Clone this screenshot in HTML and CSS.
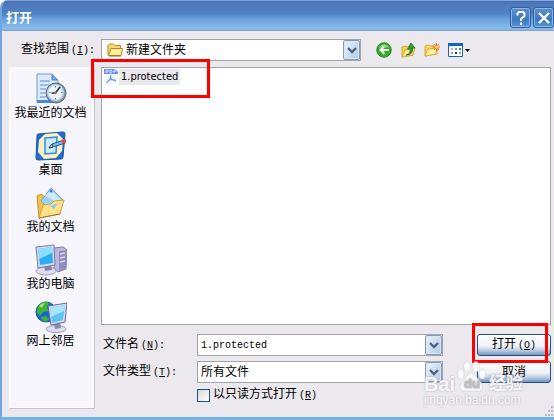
FILE: index.html
```html
<!DOCTYPE html>
<html lang="zh-CN">
<head>
    <meta charset="UTF-8">
    <meta name="viewport" content="width=device-width, initial-scale=1.0">
    <title>打开</title>
    <link rel="stylesheet" href="styles.css">
</head>
<body>
    <div class="window">
        <header class="titlebar">
            <h1>打开</h1>
            <button type="button" class="title-btn" aria-label="帮助">
                <svg width="12" height="14" viewBox="0 0 12 14"><path d="M2.500 4.500V2.500L4 1h4l1.500 1.500v2.500L6 8v2M6 11.500V14" fill="none" stroke="#fff" stroke-width="2"/></svg>
            </button>
            <button type="button" class="title-btn" aria-label="关闭">
                <svg width="12" height="12" viewBox="0 0 12 12"><path d="M1 1l10 10M11 1L1 11" stroke="#fff" stroke-width="2.400"/></svg>
            </button>
        </header>

        <form class="content">
            <div class="look-in">
                <label for="folder">查找范围<span class="key">(<u>I</u>):</span></label>
                <div class="combo">
                    <svg class="folder-icon" width="16" height="16" viewBox="0 0 16 16">
                        <path d="M1 13V3.500L2.500 2h4L8 3.500h5.500v2.500" fill="#f5d873" stroke="#b98a17"/>
                        <path d="M1.500 13.500L4 6.500h11.500L14 13.500z" fill="#fff0a6" stroke="#b98a17"/>
                        <path d="M2 14h12" stroke="#8e6b12"/>
                    </svg>
                    <select id="folder">
                        <option>新建文件夹</option>
                    </select>
                    <span class="arrow"><svg width="10" height="7" viewBox="0 0 10 7"><path d="M1 1l4 4 4-4" fill="none" stroke="#4d6185" stroke-width="2.400"/></svg></span>
                </div>
                <div class="tools">
                    <button type="button" aria-label="后退">
                        <svg width="16" height="16" viewBox="0 0 16 16">
                            <circle cx="8" cy="8" r="7.200" fill="#35ad29" stroke="#168216"/>
                            <path d="M2.500 5.500Q8-1 13.500 5.500" fill="#83d470"/>
                            <path d="M13 8H5M8.500 4L4.500 8l4 4" fill="none" stroke="#fff" stroke-width="2"/>
                        </svg>
                    </button>
                    <button type="button" aria-label="向上一级">
                        <svg width="16" height="16" viewBox="0 0 16 16">
                            <path d="M2 15V5l4-1 1 1h6v8z" fill="#f2cf58" stroke="#d7a831"/>
                            <path d="M2 15L5 8l10-2-2 7z" fill="#ffe991" stroke="#d7a831"/>
                            <path d="M6 13q5-1 4-6H7.500L11 1l4 5h-2.500q1 7-6.500 7z" fill="#329c32" stroke="#1c721c" stroke-width=".8"/>
                        </svg>
                    </button>
                    <button type="button" aria-label="新建文件夹">
                        <svg width="16" height="16" viewBox="0 0 16 16">
                            <path d="M1 14V4l4-1 1 1h7v8z" fill="#f5d56b" stroke="#dbab36"/>
                            <path d="M1 14L4 7l10-1-2 6z" fill="#fff0a2" stroke="#dbab36"/>
                            <path d="M12.500 1v8M8.500 5h8M10 2l5 6M15 2l-5 6" stroke="#f26522"/>
                            <circle cx="12.500" cy="5" r="1.500" fill="#ffdf78"/>
                        </svg>
                    </button>
                    <button type="button" class="views" aria-label="查看">
                        <svg width="22" height="16" viewBox="0 0 22 16">
                            <path d="M.5 1.500h14v13H.5z" fill="#fff" stroke="#0c65ce"/>
                            <path d="M0 1h15v3H0z" fill="#0c65ce"/>
                            <path d="M3 6h2v2H3z" fill="#b6a8d8"/><path d="M7 6h2v2H7z" fill="#6696d8"/><path d="M11 6h2v2h-2z" fill="#2c9c45"/>
                            <path d="M3 10h2v2H3z" fill="#f08068"/><path d="M7 10h2v2H7z" fill="#1a3fa0"/><path d="M11 10h2v2h-2z" fill="#c8a020"/>
                            <path d="M17 7h5l-2.500 3z" fill="#000"/>
                        </svg>
                    </button>
                </div>
            </div>

            <div class="panes">
                <nav class="places">
                    <a href="#">
                        <svg width="32" height="32" viewBox="0 0 32 32">
                            <path d="M2 1h15l6 6v22H2z" fill="#dcebff" stroke="#6f9edb"/>
                            <path d="M17 1v6h6" fill="#6baaf0" stroke="#477fc7"/>
                            <path d="M5 8h10M5 12h9M5 16h6M5 20h5M5 24h6" stroke="#85aee3" stroke-width="1.500"/>
                            <path d="M2 27h17v3H2z" fill="#4788dc"/>
                            <circle cx="21" cy="20" r="10" fill="#8798a8" stroke="#586778"/>
                            <circle cx="20.500" cy="19.500" r="7.800" fill="#e7f7ff" stroke="#c3d5e0" stroke-width="1.500"/>
                            <path d="M20.500 13v1.500M20.500 25v1.500M14 19.500h1.500M26 19.500h1.500" stroke="#587aa0"/>
                            <path d="M25 14l-4.500 6h-4" fill="none" stroke="#24313f" stroke-width="1.600"/>
                            <circle cx="20.500" cy="20" r="1.200" fill="#f05d24"/>
                        </svg>
                        <span>我最近的文档</span>
                    </a>
                    <a href="#">
                        <svg width="32" height="32" viewBox="0 0 32 32">
                            <path d="M3 4l25-2q2 0 2 2l-2 23q0 2-2 2L3 30q-2 0-2-2L2 6q0-2 1-2z" fill="#1f6ed4" stroke="#1552a8"/>
                            <path d="M10 4l12-1 6 6-1 12-6 7-12 1-6-7 1-12z" fill="#fff1bd"/>
                            <path d="M10 8l12-1-1 16-11 1z" fill="#c9eaff" stroke="#2b8be0" stroke-width="1.500"/>
                            <path d="M14 18l3-4 12-4 1 3-12 4z" fill="#75b8f3" stroke="#285a94"/>
                            <path d="M14 18l3-4 1 3z" fill="#fff" stroke="#222" stroke-width=".8"/>
                            <circle cx="29" cy="11" r="2.300" fill="#e34b33"/>
                        </svg>
                        <span>桌面</span>
                    </a>
                    <a href="#">
                        <svg width="32" height="32" viewBox="0 0 32 32">
                            <path d="M2 9l4-2 4 3 14 1v14L4 31z" fill="#efc24a" stroke="#c6922e"/>
                            <path d="M16 1l12 12-10 13L6 14z" fill="#9cd1fa" stroke="#67a9e3"/>
                            <path d="M16 3l10 10-2 3L10 9z" fill="#cfeaff"/>
                            <circle cx="16" cy="4" r="1.500" fill="#2f83d7"/>
                            <path d="M4 31l4-13 8-1 3-3 10-1-4 14z" fill="#ffe18a" stroke="#d5a13a"/>
                            <path d="M15 19l8-3-4 6z" fill="#8bcaf7"/>
                            <path d="M4 31l21-4" stroke="#a8751d"/>
                        </svg>
                        <span>我的文档</span>
                    </a>
                    <a href="#">
                        <svg width="32" height="32" viewBox="0 0 32 32">
                            <path d="M19 4l9-1 4 3-1 19-8 3-4-3z" fill="#b9b8dc" stroke="#8281b0"/>
                            <path d="M24 7l8-1-1 19-7 2z" fill="#8f8ebb"/>
                            <path d="M25 10l5-1M25 14l5-1M25 18l5-1" stroke="#d6d6ef" stroke-width="1.500"/>
                            <ellipse cx="11" cy="27" rx="10" ry="4" fill="#dedeed" stroke="#9f9ebf"/>
                            <path d="M9 21l7-1 1 6-7 1z" fill="#8280ac"/>
                            <path d="M1 3l18-2 1 20-17 3z" fill="#d9daef" stroke="#797aa8"/>
                            <path d="M3 5l14-2 1 16-13 2z" fill="#28aef5"/>
                            <path d="M3 5l14-2v6L4 15z" fill="#90deff"/>
                        </svg>
                        <span>我的电脑</span>
                    </a>
                    <a href="#">
                        <svg width="32" height="32" viewBox="0 0 32 32">
                            <circle cx="11" cy="11" r="10" fill="#1b65d1" stroke="#154fa6"/>
                            <path d="M5 3q6-4 9-1l-2 4 1 4-5 1-3 4-3-4q0-5 3-8zM6 16l5-1 3 3-3 3q-4-1-5-5z" fill="#40b438"/>
                            <path d="M4 5q2-3 6-3l-3 5z" fill="#9ce26c"/>
                            <ellipse cx="21" cy="28" rx="10" ry="3.500" fill="#dedeed" stroke="#9f9ebf"/>
                            <path d="M19 21l6-1 1 7-6 1z" fill="#8c8ab3"/>
                            <path d="M13 5l19-3-2 19-14 3z" fill="#d8dbed" stroke="#676b98"/>
                            <path d="M15 7l15-3-2 15-11 3z" fill="#5cc3f5"/>
                            <path d="M15 7l15-3-1 6-13 6z" fill="#a6e4ff"/>
                        </svg>
                        <span>网上邻居</span>
                    </a>
                </nav>

                <div class="main">
                    <ul class="files">
                        <li class="marked">
                            <svg width="14" height="16" viewBox="0 0 14 16">
                                <path d="M1 0h12v16H1z" fill="#f5f8ff"/>
                                <path d="M0 0h11l3 3v2H0z" fill="#6591de"/>
                                <path d="M2 4V1h2v2H2M6 1v3h1l1-1V2L7 1zM10 4V1h2M10 2.500h2" fill="none" stroke="#e2ecff" stroke-width=".8"/>
                                <path d="M6.500 6q1 4-4 8M6.500 6q-.5 5 5.500 6M4 11.500q4-2 8 0" fill="none" stroke="#719be3" stroke-width="1.200"/>
                            </svg>
                            <span class="file-name">1.protected</span>
                        </li>
                    </ul>

                    <div class="fields">
                        <label for="name">文件名<span class="key">(<u>N</u>):</span></label>
                        <div class="combo">
                            <input type="text" id="name" class="mono" value="1.protected">
                            <span class="arrow"><svg width="10" height="7" viewBox="0 0 10 7"><path d="M1 1l4 4 4-4" fill="none" stroke="#4d6185" stroke-width="2.400"/></svg></span>
                        </div>
                        <div class="marked">
                            <button type="button" class="btn">打开<span class="key">(<u>O</u>)</span></button>
                        </div>

                        <label for="type">文件类型<span class="key">(<u>T</u>):</span></label>
                        <div class="combo">
                            <select id="type">
                                <option>所有文件</option>
                            </select>
                            <span class="arrow"><svg width="10" height="7" viewBox="0 0 10 7"><path d="M1 1l4 4 4-4" fill="none" stroke="#4d6185" stroke-width="2.400"/></svg></span>
                        </div>
                        <button type="button" class="btn">取消</button>

                        <div class="readonly">
                            <input type="checkbox" id="readonly">
                            <label for="readonly">以只读方式打开<span class="key">(<u>R</u>)</span></label>
                        </div>
                    </div>
                </div>
            </div>
        </form>

        <div class="watermark">
            <div class="brand">
                <span class="latin">Bai</span>
                <svg width="34" height="32" viewBox="0 0 32 34">
                    <ellipse cx="4" cy="14" rx="3.500" ry="5"/>
                    <ellipse cx="11" cy="6" rx="3.800" ry="5.500"/>
                    <ellipse cx="20" cy="6" rx="3.800" ry="5.500"/>
                    <ellipse cx="27" cy="14" rx="3.500" ry="5"/>
                    <path d="M15.500 13q4 0 6 5l5 6q3 9-6 8h-10q-9 1-6-8l5-6q2-5 6-5z"/>
                    <text x="16" y="29">du</text>
                </svg>
                <span>经验</span>
            </div>
            <div class="site">jingyan.baidu.com</div>
        </div>
        <svg class="grip" width="9" height="12" viewBox="0 0 9 12"><path d="M6 1h2v2H6zM3 5h2v2H3zM6 5h2v2H6zM0 9h2v2H0zM3 9h2v2H3zM6 9h2v2H6z" fill="#b9b7c0"/></svg>
    </div>
</body>
</html>
```
FILE: styles.css
```css
* {
    margin: 0;
    padding: 0;
    box-sizing: border-box;
}
body {
    background-color: #fff;
    font-family: 'Liberation Sans', 'Noto Sans CJK SC', sans-serif;
    font-size: 12px;
    line-height: 16px;
    color: #000;
}
button, input, select {
    font: inherit;
    color: inherit;
}
svg {
    display: block;
    flex: none;
}
.window {
    position: relative;
    display: flex;
    flex-direction: column;
    min-height: 100vh;
    background-color: #ebe9ed;
    border-left: 2px solid #6ea6e6;
    border-bottom: 3px solid #6fb2ee;
    border-top-left-radius: 8px;
    overflow: hidden;
}

/* title bar */
.titlebar {
    display: flex;
    align-items: center;
    gap: 2px;
    height: 31px;
    padding: 4px 0 0 4px;
    background: linear-gradient(#c9dcf3 0, #3c6fb8 1px, #5077b8 3px, #4f83c5 14px, #649dda 18px, #8cc0e9 29px, #79a5e6 30px);
}
.titlebar h1 {
    flex: 1;
    font-size: 13px;
    line-height: 18px;
    color: #fff;
}
.title-btn {
    display: flex;
    justify-content: center;
    align-items: center;
    width: 21px;
    height: 21px;
    border: 1px solid #315b9e;
    border-radius: 3px;
    background: linear-gradient(#5e8fcd, #3c78c1 60%, #5694d5);
    box-shadow: inset 0 0 0 1px #8bb6e5;
}

/* look in */
.content {
    flex: 1;
    display: flex;
    flex-direction: column;
    gap: 6px;
    padding: 8px 3px 9px 7px;
}
.look-in {
    display: flex;
    align-items: center;
}
.look-in label {
    width: 92px;
    padding-left: 12px;
}
.look-in .combo {
    flex: 1;
}
.key,
.combo .mono {
    font-family: 'Liberation Mono', monospace;
    font-size: 10px;
}
.key {
    margin-left: 2px;
}
.combo {
    position: relative;
    display: flex;
    align-items: center;
    height: 22px;
    border: 1px solid #a5a3aa;
    background-color: #fff;
}
.combo select,
.combo input {
    flex: 1;
    min-width: 0;
    height: 20px;
    padding: 0 20px 0 3px;
    border: none;
    outline: none;
    appearance: none;
    background: none;
}
.folder-icon {
    margin-left: 5px;
}
.arrow {
    position: absolute;
    top: 0;
    right: 0;
    display: flex;
    justify-content: center;
    align-items: center;
    width: 17px;
    height: 20px;
    border: 1px solid #7f9dbd;
    border-radius: 2px;
    background: linear-gradient(120deg, #edf3fb, #b1c9e7);
    box-shadow: inset 0 0 0 1px #dbe7f5;
    pointer-events: none;
}
.tools {
    display: flex;
    gap: 8px;
    width: 190px;
    padding-left: 15px;
}
.tools button {
    border: none;
    background: none;
}

/* places bar */
.panes {
    flex: 1;
    display: flex;
    gap: 7px;
}
.places {
    width: 85px;
    padding: 5px 2px 0 0;
    background-color: #f7f6fd;
    border: 1px solid #fff;
    box-shadow: 1px 1px 0 #c5c4ca;
}
.places a {
    display: flex;
    flex-direction: column;
    align-items: center;
    height: 57px;
    color: #000;
    text-decoration: none;
}

/* file list */
.main {
    flex: 1;
    display: flex;
    flex-direction: column;
    gap: 9px;
}
.files {
    flex: 1;
    display: flex;
    flex-direction: column;
    align-items: flex-start;
    list-style: none;
    border: 1px solid #a5a3aa;
    background-color: #fff;
}
.files li {
    display: flex;
    align-items: center;
    gap: 1px;
    padding: 1px 0 0 2px;
}
.file-name {
    padding: 0 2px;
    font-family: 'DejaVu Sans Condensed', 'DejaVu Sans', sans-serif;
    font-size: 11px;
    background-color: #ebe9ed;
}
.marked {
    position: relative;
}
.marked::after {
    content: '';
    position: absolute;
    border: 3px solid #fe0000;
    pointer-events: none;
}
.files .marked::after {
    inset: -9px -30px -13px -11px;
}
.fields .marked::after {
    inset: -11px 3px -7px -5px;
}

/* bottom fields */
.fields {
    display: grid;
    grid-template-columns: 96px 1fr 74px;
    row-gap: 5px;
    align-items: center;
    padding-bottom: 6px;
}
.fields > label {
    padding-left: 2px;
}
.fields .combo {
    margin-right: 34px;
}
.btn {
    display: block;
    width: 100%;
    height: 22px;
    border: 1px solid #27507f;
    border-radius: 3px;
    background: linear-gradient(#fff, #eef1f6 55%, #b4c6dd 80%, #6d91bf);
}
.fields .readonly {
    grid-column: 2 / 4;
    display: flex;
    align-items: center;
    gap: 3px;
    height: 14px;
}
.readonly input {
    width: 13px;
    height: 13px;
    border: 1px solid #1c5180;
    appearance: none;
    background: linear-gradient(135deg, #dcdcd7, #fff);
}

/* overlay mark */
.watermark {
    position: absolute;
    right: 31px;
    bottom: 10px;
    color: rgba(255, 255, 255, .9);
    text-shadow: 0 0 2px #a9a7ae;
    pointer-events: none;
}
.brand {
    display: flex;
    align-items: flex-end;
    font-size: 17px;
    line-height: 18px;
    font-weight: bold;
}
.brand .latin {
    font-size: 20px;
}
.brand svg {
    fill: rgba(255, 255, 255, .9);
    stroke: #c6c4cb;
    stroke-width: .5px;
}
.brand text {
    font-size: 14px;
    fill: #c5c3ca;
    text-anchor: middle;
}
.site {
    font-size: 12px;
    line-height: 14px;
}
.grip {
    position: absolute;
    right: 0;
    bottom: 0;
}
```
